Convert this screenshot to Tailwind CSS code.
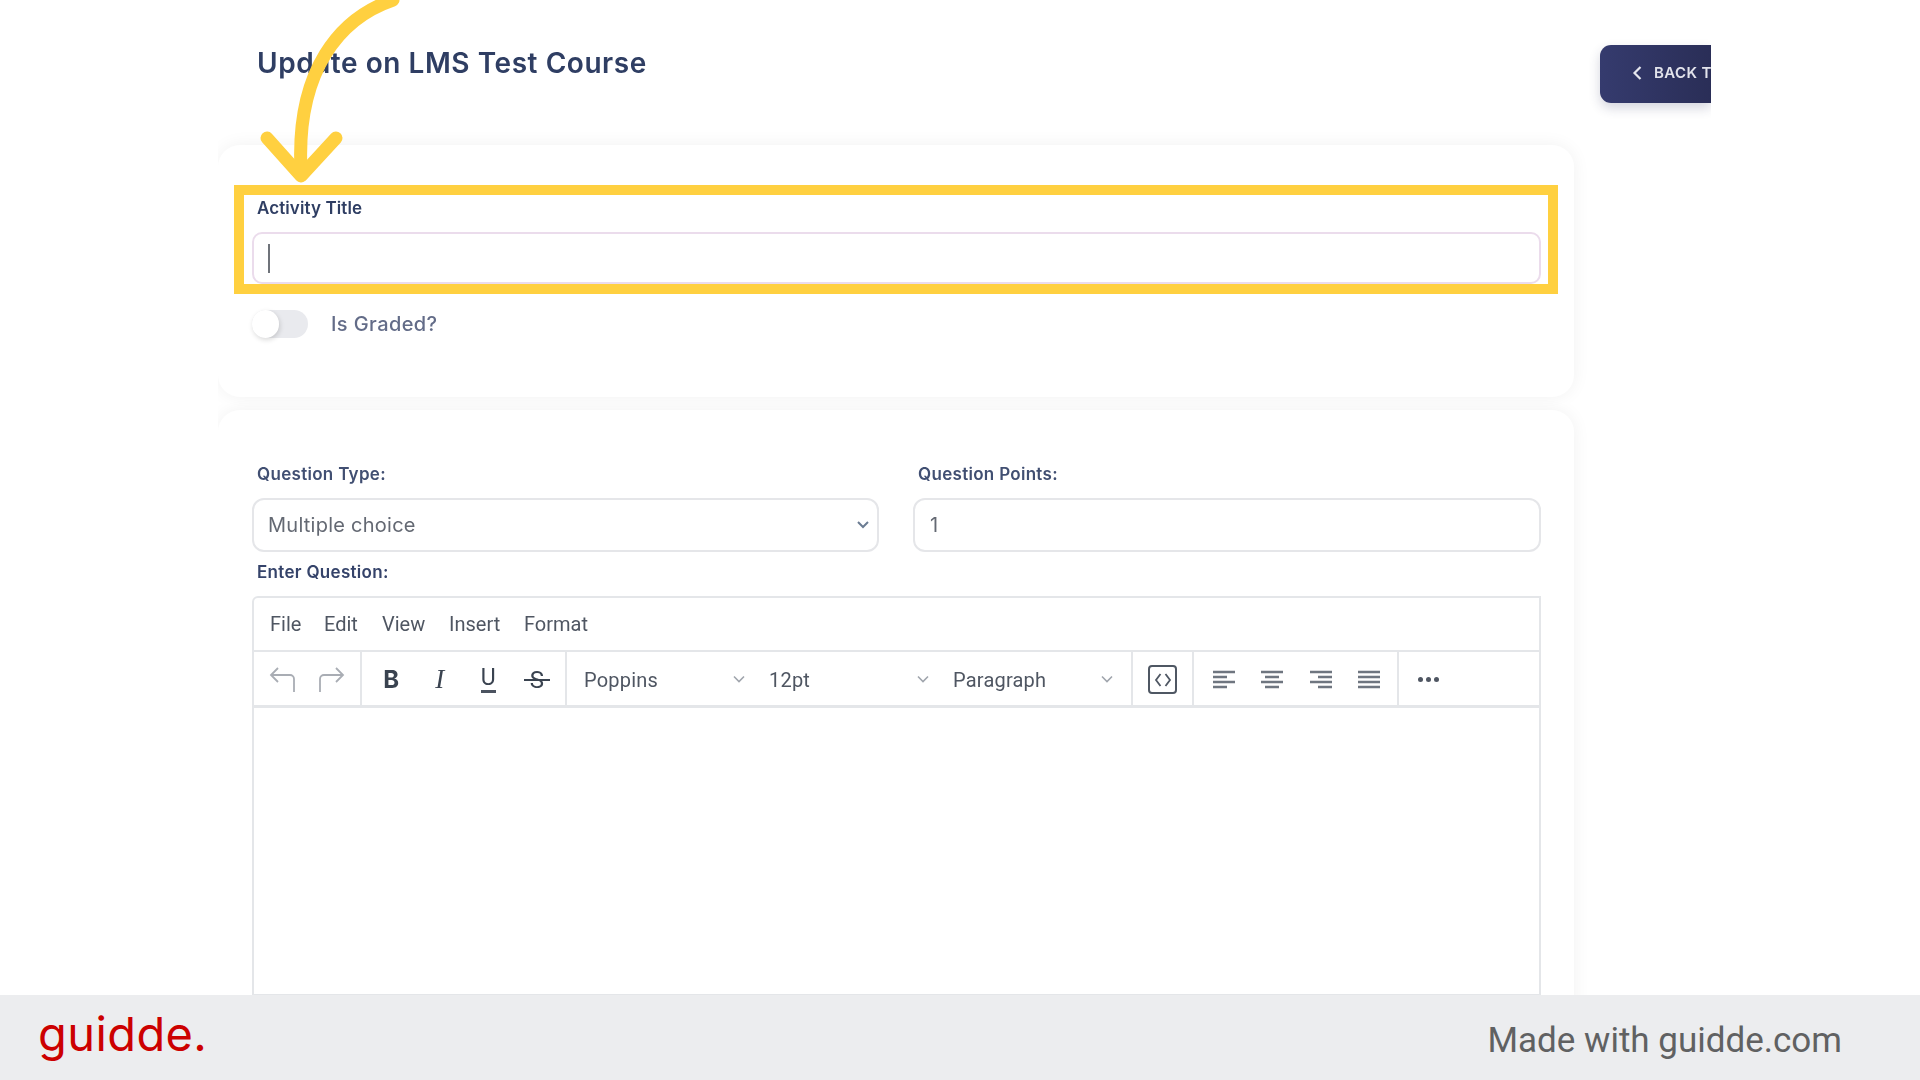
<!DOCTYPE html>
<html>
<head>
<meta charset="utf-8">
<script src="https://cdn.jsdelivr.net/npm/@tailwindcss/browser@4"></script>
</head>
<body>
<div class="relative w-[1920px] h-[1080px] overflow-hidden bg-white flex flex-col font-['Inter',sans-serif]">
  <main class="h-[995px] overflow-hidden pl-[218px] blur-[0.7px]">
    <div class="w-[1493px] overflow-hidden pb-4">
      <header class="h-[145px] flex justify-between items-start">
        <h1 class="ml-[39px] mt-[45px] h-[36px] leading-[36px] text-[28px] font-semibold tracking-[0.55px] text-[#2f3e63] whitespace-nowrap">Update on LMS Test Course</h1>
        <div class="mt-[45px] w-[111px] h-[58px] rounded-l-[11px] bg-gradient-to-r from-[#353b6e] to-[#2a2e57] shadow-[0_5px_12px_rgba(40,44,90,0.2)] flex items-center pl-[32px] pb-[2px] overflow-hidden">
          <svg class="w-[12px] h-[18px] shrink-0" viewBox="0 0 12 18" fill="none" stroke="#e6e7ee" stroke-width="2.2"><path d="M8.500 3 2.500 9l6 6"/></svg>
          <span class="ml-[10px] text-[15px] font-semibold tracking-[0.4px] text-[#e3e4ec] whitespace-nowrap">BACK TO</span>
        </div>
      </header>
      <section class="w-[1356px] h-[252px] rounded-[22px] bg-white shadow-[0_0_18px_rgba(0,0,0,0.06)] pt-[53px] px-[34px]">
        <label class="block ml-[5px] h-[20px] leading-[20px] text-[17px] font-semibold tracking-[0.1px] text-[#2f3e63]">Activity Title</label>
        <div class="mt-[14px] h-[52px] w-[1289px] rounded-[10px] border-2 border-[#ebdcec] flex items-center pl-[14px]">
          <div class="w-[2px] h-[29px] bg-[#6f737a]"></div>
        </div>
        <div class="mt-[25px] flex items-center">
          <div class="relative w-[56px] h-[28px] rounded-full bg-[#e9eaee]">
            <div class="absolute left-0 top-0 w-[27px] h-[28px] rounded-full bg-white shadow-[1px_2px_5px_rgba(0,0,0,0.15)]"></div>
          </div>
          <span class="ml-[23px] text-[20px] font-medium tracking-[0.4px] text-[#636c88]">Is Graded?</span>
        </div>
      </section>
      <section class="w-[1356px] mt-[13px] h-[700px] rounded-[22px] bg-white shadow-[0_0_18px_rgba(0,0,0,0.06)] pt-[54px] px-[34px]">
        <div class="grid grid-cols-[627px_628px] gap-x-[34px]">
          <div>
            <label class="block ml-[5px] h-[20px] leading-[20px] text-[17px] font-semibold tracking-[0.3px] text-[#414f72]">Question Type:</label>
            <div class="mt-[14px] h-[54px] rounded-[12px] border-2 border-[#e5e6e9] flex items-center justify-between pl-[14px] pr-[7px]">
              <span class="text-[20px] tracking-[0.25px] text-[#646973]">Multiple choice</span>
              <svg class="w-[14px] h-[10px]" viewBox="0 0 14 10" fill="none" stroke="#6b7c93" stroke-width="2"><path d="m2 2 5 5 5-5"/></svg>
            </div>
          </div>
          <div>
            <label class="block ml-[5px] h-[20px] leading-[20px] text-[17px] font-semibold tracking-[0.3px] text-[#414f72]">Question Points:</label>
            <div class="mt-[14px] h-[54px] rounded-[12px] border-2 border-[#e5e6e9] flex items-center pl-[15px]">
              <span class="text-[20px] text-[#646973]">1</span>
            </div>
          </div>
        </div>
        <label class="block ml-[5px] mt-[10px] h-[20px] leading-[20px] text-[17px] font-semibold tracking-[0.3px] text-[#35436a]">Enter Question:</label>
        <div class="mt-[14px] w-[1289px] h-[400px] rounded-tl-[6px] border-2 border-[#e4e6e9] flex flex-col text-[#4f5662]">
          <nav class="h-[54px] shrink-0 border-b-2 border-[#e4e6e9] flex items-center pl-[16px] text-[20px] font-['Roboto',sans-serif] text-[#4f5662]">
            <span class="w-[54px]">File</span><span class="w-[58px]">Edit</span><span class="w-[67px]">View</span><span class="w-[75px]">Insert</span><span>Format</span>
          </nav>
          <div class="h-[56px] shrink-0 border-b-[3px] border-[#e4e6e9] flex items-stretch font-['Roboto',sans-serif]">
            <div class="w-[108px] border-r-2 border-[#e4e6e9] flex items-center pl-[5px]">
              <div class="w-[48px] flex justify-center"><svg class="w-[28px] h-[28px]" viewBox="0 0 28 28" fill="none" stroke="#a9adb4" stroke-width="1.8"><path d="M9 3 2 10l7 7M2 10h19a4 4 0 0 1 4 4v13"/></svg></div>
              <div class="w-[48px] flex justify-center"><svg class="w-[28px] h-[28px]" viewBox="0 0 28 28" fill="none" stroke="#a9adb4" stroke-width="1.8"><path d="m19 3 7 7-7 7M26 10H7a4 4 0 0 0-4 4v13"/></svg></div>
            </div>
            <div class="w-[205px] border-r-2 border-[#e4e6e9] flex items-center pl-[5px] pt-[2px] text-[#3a4350]">
              <div class="w-[48.500px] flex justify-center text-[24px] font-bold font-['Inter',sans-serif]">B</div>
              <div class="w-[48.500px] flex justify-center text-[27px] italic font-['Liberation_Serif',serif]">I</div>
              <div class="w-[48.500px] flex justify-center"><span class="text-[23px] leading-[24px] border-b-[3px] border-[#4b5360]">U</span></div>
              <div class="w-[48.500px] flex justify-center"><span class="relative text-[24px] leading-[28px]">S<span class="absolute -left-[6px] -right-[6px] top-[13px] h-[2px] bg-[#3a4350]"></span></span></div>
            </div>
            <div class="w-[566px] border-r-2 border-[#e4e6e9] flex items-center pt-[2px] text-[20px] tracking-[0.2px]">
              <div class="w-[185px] pl-[17px] pr-[6px] flex items-center justify-between"><span>Poppins</span><svg class="w-[14px] h-[9px]" viewBox="0 0 14 9" fill="none" stroke="#a0a5ad" stroke-width="1.6"><path d="m2 1.500 5 5 5-5"/></svg></div>
              <div class="w-[184px] pl-[17px] pr-[6px] flex items-center justify-between"><span>12pt</span><svg class="w-[14px] h-[9px]" viewBox="0 0 14 9" fill="none" stroke="#a0a5ad" stroke-width="1.6"><path d="m2 1.500 5 5 5-5"/></svg></div>
              <div class="w-[184px] pl-[17px] pr-[6px] flex items-center justify-between"><span>Paragraph</span><svg class="w-[14px] h-[9px]" viewBox="0 0 14 9" fill="none" stroke="#a0a5ad" stroke-width="1.6"><path d="m2 1.500 5 5 5-5"/></svg></div>
            </div>
            <div class="w-[61px] border-r-2 border-[#e4e6e9] flex items-center justify-center pt-[2px]">
              <div class="w-[29px] h-[29px] rounded-[4px] border-2 border-[#4f5763] flex items-center justify-center">
                <svg class="w-[18px] h-[16px]" viewBox="0 0 18 16" fill="none" stroke="#4f5763" stroke-width="1.8"><path d="M6.500 2 2 8l4.500 6M11.500 2 16 8l-4.500 6"/></svg>
              </div>
            </div>
            <div class="w-[205px] border-r-2 border-[#e4e6e9] flex items-center pl-[6px] pt-[2px]">
              <div class="w-[48.300px] flex justify-center"><svg class="w-[22px] h-[20px]" viewBox="0 0 22 20" fill="none" stroke="#6f7680" stroke-width="2.400"><path d="M0 2h22M0 7h14M0 12h22M0 17h14"/></svg></div>
              <div class="w-[48.300px] flex justify-center"><svg class="w-[22px] h-[20px]" viewBox="0 0 22 20" fill="none" stroke="#6f7680" stroke-width="2.400"><path d="M0 2h22M4 7h14M0 12h22M4 17h14"/></svg></div>
              <div class="w-[48.300px] flex justify-center"><svg class="w-[22px] h-[20px]" viewBox="0 0 22 20" fill="none" stroke="#6f7680" stroke-width="2.400"><path d="M0 2h22M8 7h14M0 12h22M8 17h14"/></svg></div>
              <div class="w-[48.300px] flex justify-center"><svg class="w-[22px] h-[20px]" viewBox="0 0 22 20" fill="none" stroke="#6f7680" stroke-width="2.400"><path d="M0 2h22M0 7h22M0 12h22M0 17h22"/></svg></div>
            </div>
            <div class="flex-1 flex items-center pl-[5px] pt-[2px]">
              <div class="w-[48px] flex justify-center gap-[3px]">
                <span class="w-[5px] h-[5px] rounded-full bg-[#4f5662]"></span><span class="w-[5px] h-[5px] rounded-full bg-[#4f5662]"></span><span class="w-[5px] h-[5px] rounded-full bg-[#4f5662]"></span>
              </div>
            </div>
          </div>
          <div class="flex-1"></div>
        </div>
      </section>
    </div>
  </main>
  <footer class="h-[85px] bg-[#ecedef] flex items-center justify-between pl-[38px] pr-[78px]">
    <span class="text-[47px] leading-none font-['Inter',sans-serif] tracking-[0.4px] text-[#cc0000] -mt-[8px]">guidde.</span>
    <span class="text-[35px] leading-none font-['Roboto',sans-serif] text-[#606162] mt-[6px]">Made with guidde.com</span>
  </footer>
  <div class="absolute left-[234px] top-[185px] w-[1324px] h-[109px] border-[10px] border-[#ffd040]"></div>
  <svg class="absolute left-0 top-0 w-[500px] h-[200px]" viewBox="0 0 500 200" fill="none" stroke="#ffd040" stroke-width="13" stroke-linecap="round" stroke-linejoin="round"><path d="M393 0C340 18 296 70 301 170"/><path d="M267 138 301 176 336 138"/></svg>
</div>
</body>
</html>
